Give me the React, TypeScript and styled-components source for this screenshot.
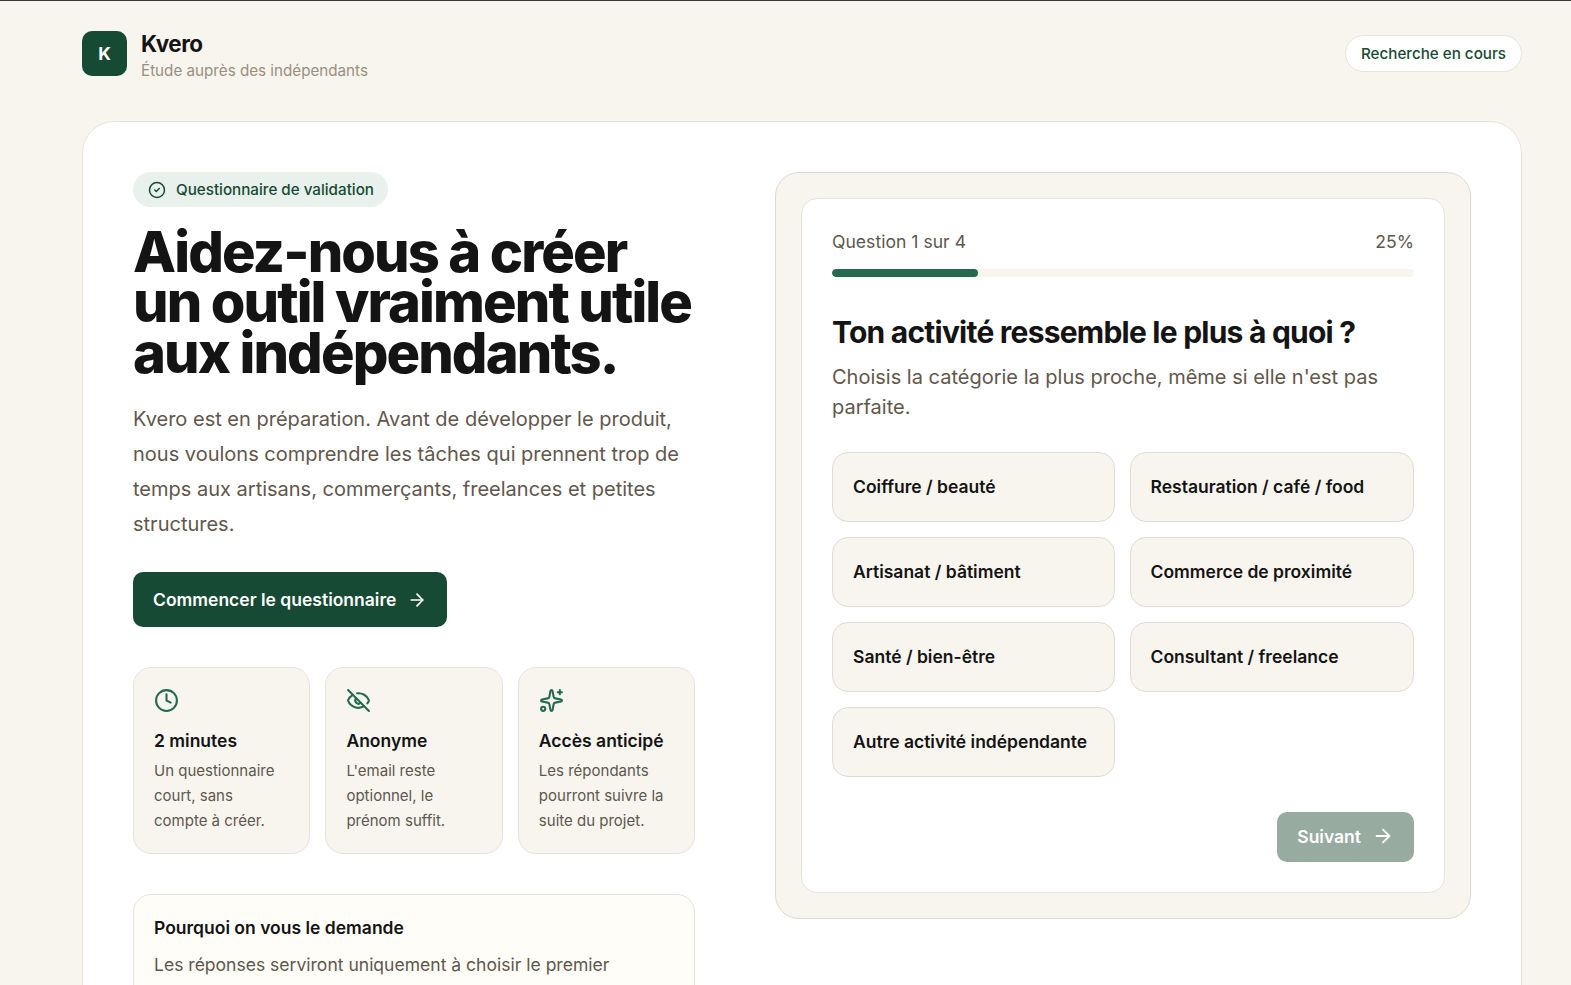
import React from "react";
import styled, { createGlobalStyle } from "styled-components";
import { ArrowRight, CircleCheck, Clock, EyeOff, Sparkles } from "lucide-react";

const Global = createGlobalStyle`
  * { box-sizing: border-box; }
  html, body { margin: 0; height: 985px; overflow: hidden; }
  body { background: #f8f5ef; color: #141414; font-family: Inter, "Liberation Sans", sans-serif; border-top: 1px solid #3a3a3a; }
`;

const Page = styled.div`
  padding: 0 49px 0 82px;
  height: 984px;
  overflow: hidden;
`;
const Header = styled.header`
  display: flex;
  justify-content: space-between;
  align-items: center;
  height: 120px;
  padding-bottom: 16px;
`;
const Brand = styled.div`
  display: flex;
  align-items: center;
  gap: 14px;
`;
const Logo = styled.div`
  width: 45px;
  height: 45px;
  border-radius: 10px;
  background: #174a34;
  color: #fff;
  font-weight: 700;
  font-size: 17.6px;
  display: flex;
  align-items: center;
  justify-content: center;
`;
const BrandCopy = styled.div`
  padding-top: 7px;
`;
const BrandName = styled.div`
  font-size: 22.4px;
  line-height: 28px;
  font-weight: 700;
  letter-spacing: -0.45px;
`;
const BrandSub = styled.div`
  font-size: 15.2px;
  line-height: 24px;
  margin-top: 1px;
  color: #9a8f7f;
`;
const Status = styled.div`
  height: 37px;
  border-radius: 19px;
  background: #fff;
  border: 1px solid #e7e3dc;
  padding: 0 15px;
  font-size: 15.2px;
  font-weight: 550;
  color: #174a34;
  display: flex;
  align-items: center;
`;
const Card = styled.main`
  background: #fff;
  border: 1px solid #e7e3dc;
  border-radius: 32px;
  padding: 50px;
  display: grid;
  grid-template-columns: 562.3px 696px;
  justify-content: space-between;
  align-items: start;
`;
const Left = styled.section`
  display: flex;
  flex-direction: column;
  align-items: stretch;
`;
const Badge = styled.div`
  align-self: flex-start;
  display: inline-flex;
  align-items: center;
  gap: 10px;
  height: 35px;
  padding: 0 14px 0 15px;
  border-radius: 18px;
  background: #e8f1ec;
  color: #174a34;
  font-size: 15.2px;
  font-weight: 550;
`;
const Title = styled.h1`
  margin: 20px 0 0;
  font-size: 56px;
  line-height: 50.4px;
  font-weight: 800;
  letter-spacing: -1.9px;
  color: #141414;
`;
const Lead = styled.p`
  margin: 24px 0 0;
  font-size: 20px;
  line-height: 35px;
  color: #5f574d;
`;
const Cta = styled.button`
  align-self: flex-start;
  margin-top: 30px;
  height: 55px;
  padding: 0 20px;
  border: 0;
  border-radius: 10px;
  background: #174a34;
  color: #fff;
  font: 600 17.5px Inter, "Liberation Sans", sans-serif;
  display: flex;
  align-items: center;
  gap: 11px;
`;
const Features = styled.div`
  margin-top: 40px;
  display: grid;
  grid-template-columns: repeat(3, 1fr);
  gap: 15px;
`;
const Feature = styled.div`
  background: #f8f5ef;
  border: 1px solid #e7e3dc;
  border-radius: 18px;
  padding: 20px;
  height: 187px;
  color: #256a4d;
`;
const FeatureTitle = styled.div`
  margin-top: 10px;
  font-size: 17.5px;
  line-height: 28px;
  font-weight: 600;
  color: #141414;
`;
const FeatureText = styled.div`
  margin-top: 3px;
  font-size: 15px;
  line-height: 25px;
  color: #5f574d;
`;
const Why = styled.div`
  margin-top: 40px;
  background: #fffdf8;
  border: 1px solid #e7e3dc;
  border-radius: 18px;
  padding: 20px;
  height: 200px;
`;
const WhyTitle = styled.div`
  font-size: 17.5px;
  line-height: 26px;
  font-weight: 600;
`;
const WhyText = styled.div`
  margin-top: 9px;
  font-size: 17.55px;
  line-height: 30px;
  color: #5f574d;
`;
const Panel = styled.section`
  background: #f8f5ef;
  border: 1px solid #dedad3;
  border-radius: 24px;
  padding: 25px;
`;
const Inner = styled.div`
  background: #fff;
  border: 1px solid #e7e3dc;
  border-radius: 16px;
  padding: 30px;
  height: 695px;
`;
const ProgressRow = styled.div`
  display: flex;
  justify-content: space-between;
  font-size: 17.6px;
  line-height: 26px;
  color: #5f574d;
`;
const Track = styled.div`
  margin-top: 14px;
  height: 8px;
  border-radius: 4px;
  background: #f8f5ef;
  overflow: hidden;
`;
const Fill = styled.div`
  height: 100%;
  border-radius: 4px;
  background: #256a4d;
`;
const Question = styled.h2`
  margin: 37px 0 0;
  font-size: 30px;
  line-height: 36px;
  font-weight: 700;
  letter-spacing: -0.77px;
`;
const Hint = styled.p`
  margin: 12px 0 0;
  font-size: 20px;
  line-height: 30px;
  color: #5f574d;
`;
const Options = styled.div`
  margin-top: 30px;
  display: grid;
  grid-template-columns: 282.5px 1fr;
  gap: 15px;
`;
const Option = styled.div`
  height: 70px;
  background: #f8f5ef;
  border: 1px solid #e0dcd5;
  border-radius: 16px;
  padding: 0 20px 2px;
  display: flex;
  align-items: center;
  font-size: 17.5px;
  font-weight: 600;
`;
const Footer = styled.div`
  margin-top: 35px;
  display: flex;
  justify-content: flex-end;
`;
const Next = styled.button`
  height: 50px;
  padding: 0 20px 2px;
  border: 0;
  border-radius: 10px;
  background: #98aba0;
  color: #fff;
  font: 600 17.5px Inter, "Liberation Sans", sans-serif;
  display: flex;
  align-items: center;
  gap: 11px;
`;

const features = [
  { Icon: Clock, title: "2 minutes", text: ["Un questionnaire", "court, sans", "compte à créer."] },
  { Icon: EyeOff, title: "Anonyme", text: ["L'email reste", "optionnel, le", "prénom suffit."] },
  { Icon: Sparkles, title: "Accès anticipé", text: ["Les répondants", "pourront suivre la", "suite du projet."] },
];
const options = [
  "Coiffure / beauté",
  "Restauration / café / food",
  "Artisanat / bâtiment",
  "Commerce de proximité",
  "Santé / bien-être",
  "Consultant / freelance",
  "Autre activité indépendante",
];

export default function App() {
  return (
    <Page>
      <Global />
      <Header>
        <Brand>
          <Logo>K</Logo>
          <BrandCopy>
            <BrandName>Kvero</BrandName>
            <BrandSub>Étude auprès des indépendants</BrandSub>
          </BrandCopy>
        </Brand>
        <Status>Recherche en cours</Status>
      </Header>
      <Card>
        <Left>
          <Badge>
            <CircleCheck size={18} strokeWidth={2} />
            Questionnaire de validation
          </Badge>
          <Title>
            Aidez-nous à créer
            <br />
            un outil vraiment utile
            <br />
            aux indépendants.
          </Title>
          <Lead>
            Kvero est en préparation. Avant de développer le produit, nous voulons comprendre les tâches qui prennent
            trop de temps aux artisans, commerçants, freelances et petites structures.
          </Lead>
          <Cta>
            Commencer le questionnaire
            <ArrowRight size={20} />
          </Cta>
          <Features>
            {features.map(({ Icon, title, text }) => (
              <Feature key={title}>
                <Icon size={25} strokeWidth={2} />
                <FeatureTitle>{title}</FeatureTitle>
                <FeatureText>
                  {text.map((l) => (
                    <div key={l}>{l}</div>
                  ))}
                </FeatureText>
              </Feature>
            ))}
          </Features>
          <Why>
            <WhyTitle>Pourquoi on vous le demande</WhyTitle>
            <WhyText>Les réponses serviront uniquement à choisir le premier</WhyText>
          </Why>
        </Left>
        <Panel>
          <Inner>
            <ProgressRow>
              <span>Question 1 sur 4</span>
              <span>25%</span>
            </ProgressRow>
            <Track>
              <Fill style={{ width: "25%" }} />
            </Track>
            <Question>Ton activité ressemble le plus à quoi ?</Question>
            <Hint>Choisis la catégorie la plus proche, même si elle n'est pas parfaite.</Hint>
            <Options>
              {options.map((o) => (
                <Option key={o}>{o}</Option>
              ))}
            </Options>
            <Footer>
              <Next>
                Suivant
                <ArrowRight size={22} />
              </Next>
            </Footer>
          </Inner>
        </Panel>
      </Card>
    </Page>
  );
}
